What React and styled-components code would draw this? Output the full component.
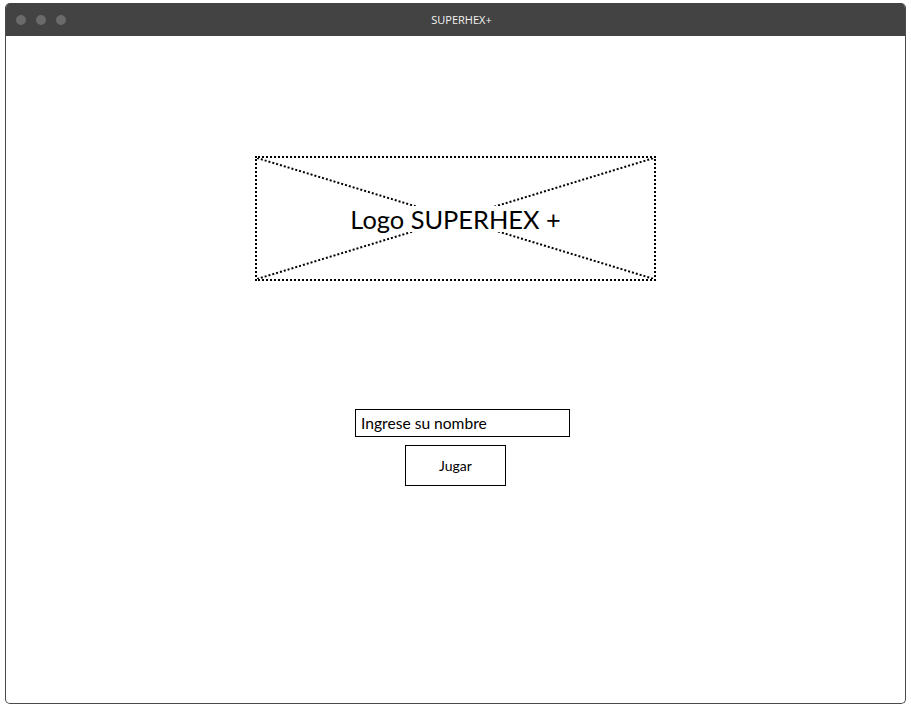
import React from "react";
import styled, { createGlobalStyle } from "styled-components";

const Global = createGlobalStyle`
  html, body { margin: 0; padding: 0; background: #ffffff; }
  body { font-family: Lato, "Open Sans", sans-serif; }
`;

const Page = styled.div`
  width: 911px;
  height: 710px;
  padding: 3px 5px 6px 5px;
  box-sizing: border-box;
  display: flex;
`;

const Window = styled.div`
  flex: 1;
  display: flex;
  flex-direction: column;
  border: 1px solid #4a4a4a;
  border-top: none;
  border-radius: 5px;
  overflow: hidden;
  background: #fff;
`;

const TitleBar = styled.div`
  height: 33px;
  background: #434343;
  display: flex;
  align-items: center;
  position: relative;
  padding-left: 10px;
  gap: 10px;
`;

const Dot = styled.span`
  width: 10px;
  height: 10px;
  border-radius: 50%;
  background: #6a6a6a;
`;

const Title = styled.div`
  position: absolute;
  left: 0;
  right: 0;
  text-align: center;
  padding-left: 12px;
  color: #f2f2f2;
  font-family: "Open Sans", sans-serif;
  font-size: 11px;
  pointer-events: none;
`;

const Content = styled.div`
  flex: 1;
  display: flex;
  flex-direction: column;
  align-items: center;
  padding-top: 120px;
`;

const LogoBox = styled.div`
  position: relative;
  width: 401px;
  height: 125px;
  box-sizing: border-box;
  border: 2px dotted #000;
  display: flex;
  align-items: center;
  justify-content: center;
`;

const Cross = styled.svg`
  position: absolute;
  inset: 0;
  width: 100%;
  height: 100%;
`;

const LogoLabel = styled.span`
  position: relative;
  background: #fff;
  font-family: Lato, sans-serif;
  font-size: 25.4px;
  line-height: 26px;
  color: #000;
`;

const Form = styled.div`
  margin-top: 128px;
  display: flex;
  flex-direction: column;
  align-items: center;
  gap: 8px;
`;

const NameInput = styled.div`
  width: 215px;
  height: 28px;
  margin-left: ${(p) => p.$shift || 0}px;
  box-sizing: border-box;
  border: 1px solid #000;
  padding-left: 5px;
  display: flex;
  align-items: center;
  font-family: Lato, sans-serif;
  font-size: 15.6px;
  color: #000;
`;

const PlayButton = styled.div`
  width: 101px;
  height: 41px;
  box-sizing: border-box;
  border: 1px solid #000;
  display: flex;
  align-items: center;
  justify-content: center;
  font-family: Lato, sans-serif;
  font-size: 14px;
  color: #000;
`;

export default function App() {
  return (
    <>
      <Global />
      <Page>
        <Window>
          <TitleBar>
            <Dot />
            <Dot />
            <Dot />
            <Title>SUPERHEX+</Title>
          </TitleBar>
          <Content>
            <LogoBox>
              <Cross viewBox="0 0 397 121" preserveAspectRatio="none">
                <line x1="0" y1="0" x2="397" y2="121" stroke="#000" strokeWidth="2" strokeDasharray="2 2" />
                <line x1="0" y1="121" x2="397" y2="0" stroke="#000" strokeWidth="2" strokeDasharray="2 2" />
              </Cross>
              <LogoLabel>Logo SUPERHEX +</LogoLabel>
            </LogoBox>
            <Form>
              <NameInput $shift={14}>Ingrese su nombre</NameInput>
              <PlayButton>Jugar</PlayButton>
            </Form>
          </Content>
        </Window>
      </Page>
    </>
  );
}
